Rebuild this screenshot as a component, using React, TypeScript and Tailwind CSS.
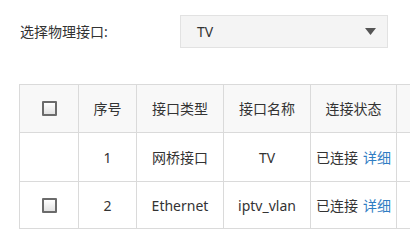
const headers = ['序号', '接口类型', '接口名称', '连接状态'];

type Row = { id: number; type: string; name: string; selectable: boolean };

const rows: Row[] = [
  { id: 1, type: '网桥接口', name: 'TV', selectable: false },
  { id: 2, type: 'Ethernet', name: 'iptv_vlan', selectable: true },
];

function Checkbox() {
  return (
    <span className="block h-[15px] w-[15px] rounded-[1px] border-2 border-[#6b6b6b] bg-gradient-to-b from-white to-[#e2e2e2]" />
  );
}

const cell = 'flex items-center justify-center border-r border-b border-[#dadada]';

export default function App() {
  return (
    <div
      className="h-[245px] w-[410px] overflow-hidden bg-white text-[14px] text-[#333]"
      style={{ fontFamily: '"Noto Sans", "Noto Sans CJK SC", sans-serif' }}
    >
      <div className="flex items-center pl-[20px] pt-[15px]">
        <span className="w-[160px]">选择物理接口:</span>
        <div className="flex h-[33px] w-[208px] items-center justify-between border border-[#e2e2e2] bg-[#f4f4f4] pl-[16px] pr-[10px]">
          <span>TV</span>
          <svg width="11" height="7" viewBox="0 0 11 7" className="mr-[1px]">
            <path d="M0 0h11L5.5 7z" fill="#555" />
          </svg>
        </div>
      </div>

      <div className="ml-[19px] mt-[36px] grid w-[430px] grid-cols-[59px_58px_87px_87px_86px_1fr] border-l border-t border-[#dadada]">
        <div className={`${cell} h-[48px] bg-[#f8f8f8]`}>
          <Checkbox />
        </div>
        {headers.map((h) => (
          <div key={h} className={`${cell} h-[48px] bg-[#f8f8f8]`}>
            {h}
          </div>
        ))}
        <div className={`${cell} h-[48px] bg-[#f8f8f8]`} />

        {rows.map((r, i) => {
          const h = i === 0 ? 'h-[49px]' : 'h-[47px]';
          return [
            <div key={`c${r.id}`} className={`${cell} ${h}`}>
              {r.selectable && <Checkbox />}
            </div>,
            <div key={`i${r.id}`} className={`${cell} ${h}`}>
              {r.id}
            </div>,
            <div key={`t${r.id}`} className={`${cell} ${h}`}>
              {r.type}
            </div>,
            <div key={`n${r.id}`} className={`${cell} ${h}`}>
              {r.name}
            </div>,
            <div key={`s${r.id}`} className={`${cell} ${h} gap-[5px]`}>
              <span>已连接</span>
              <span className="text-[#2f7dc3]">详细</span>
            </div>,
            <div key={`e${r.id}`} className={`${cell} ${h}`} />,
          ];
        })}
      </div>
    </div>
  );
}
